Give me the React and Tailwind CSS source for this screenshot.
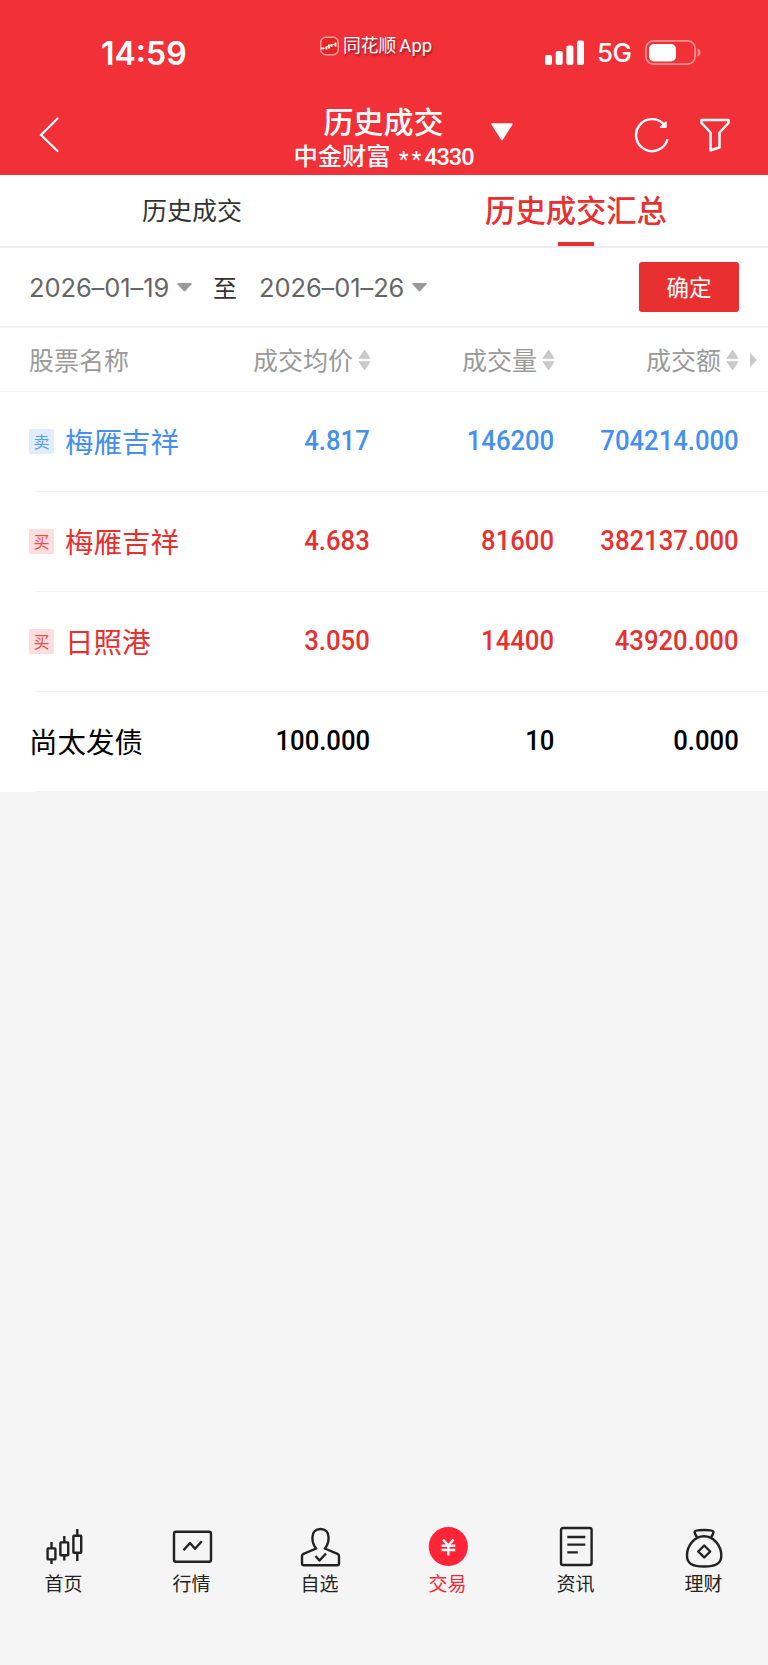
import { useState } from "react";

const trades = [
  { side: "卖", name: "梅雁吉祥", price: "4.817", volume: "146200", amount: "704214.000" },
  { side: "买", name: "梅雁吉祥", price: "4.683", volume: "81600", amount: "382137.000" },
  { side: "买", name: "日照港", price: "3.050", volume: "14400", amount: "43920.000" },
  { side: "", name: "尚太发债", price: "100.000", volume: "10", amount: "0.000" },
];

const rowColor = {
  卖: "text-[#458ff0]",
  买: "text-[#e93030]",
  "": "text-black",
};

const badgeColor = {
  卖: "bg-[#e0edfd] text-[#5b9cf1]",
  买: "bg-[#fddede] text-[#ec4c4c]",
};

const navItems = [
  {
    label: "首页",
    icon: (
      <>
        <rect x="7.6" y="25.4" width="7.8" height="11" rx="0.5" />
        <path d="M11.5 19v6M11.5 36.5v4.500" />
        <rect x="20.4" y="19.4" width="7.8" height="12.8" rx="0.5" />
        <path d="M24.3 13v6.500M24.300 32.500v5" />
        <rect x="33.4" y="12.8" width="7.8" height="17" rx="0.5" />
        <path d="M37.3 6v7M37.300 30v8" />
      </>
    ),
  },
  {
    label: "行情",
    icon: (
      <>
        <rect x="6" y="8.8" width="37" height="30" rx="2" />
        <path d="M15.5 27.3l6.500-7.300 5 5.800 6.800-7.600" />
      </>
    ),
  },
  {
    label: "自选",
    icon: (
      <>
        <path d="M20.2 25.5C17.6 22.8 16.4 19 16.4 14.6 16.4 9 19.8 6 24.5 6s8.1 3 8.1 8.6c0 4.4-1.2 8.2-3.8 10.9L41.5 30.8Q43 31.5 43 33V40.5Q43 42.3 41.2 42.3H7.8Q6 42.3 6 40.5V33Q6 31.5 7.5 30.8Z" />
        <path d="M19.5 33l4 4.5 6.5-7" />
      </>
    ),
  },
  {
    label: "交易",
    active: true,
    icon: (
      <>
        <circle cx="24.3" cy="23.5" r="19.6" fill="#ff2436" stroke="none" />
        <path d="M19 16.5l5.3 6 5.3-6M17.5 22.7h13.8M17.5 27h13.8M24.3 22.5v10" stroke="#fff" />
      </>
    ),
  },
  {
    label: "资讯",
    icon: (
      <>
        <rect x="9" y="5" width="30.6" height="37" rx="2" />
        <path d="M15.3 14h18M15.3 21.6h18M15.3 29.4h10.5" />
      </>
    ),
  },
  {
    label: "理财",
    icon: (
      <>
        <path d="M17 14C15 11.4 14.5 9.8 14.7 8.6Q15 7 24 7T33.4 8.6C33.6 9.8 33 11.4 31.2 14" />
        <path d="M24 13.2C14.5 13.2 7 22.5 7 32.5 7 40.5 12 43.5 24 43.5S41.3 40.5 41.3 32.5C41.3 22.5 33.5 13.2 24 13.2Z" />
        <path d="M24.2 22.5l6 6-6 6-6-6z" />
      </>
    ),
  },
];

function StatusBar() {
  return (
    <div className="relative h-[98px] flex items-center pt-[7px]">
      <div className="pl-[101px] pt-[2px] w-[320px] font-['Inter',sans-serif] text-[32px] leading-none font-semibold">
        14:59
      </div>

      {/* App watermark */}
      <div className="absolute left-[320px] top-[33px] flex items-center gap-1">
        <svg width="19" height="20" viewBox="0 0 19 20" fill="none">
          <rect x="0.8" y="1.3" width="17.4" height="17.4" rx="5" fill="#e32727" stroke="#fba0a2" strokeWidth="1.4" />
          <path d="M1 12.3h3M6.5 10.5v3M9 8.5v4M11.5 8v3M15.5 6.5v4" stroke="#fff" strokeWidth="1.8" />
          <path d="M3.5 12.8L9 10l6.5-2" stroke="#fff" strokeWidth="0.8" />
        </svg>
        <span className="text-[17.8px] leading-[23px] whitespace-nowrap [text-shadow:1px_2px_2px_rgba(0,0,0,0.4)]">
          同花顺<span className="font-['Roboto',sans-serif] text-[18.5px] pl-[3px]">App</span>
        </span>
      </div>

      <div className="ml-auto mr-[67px] flex items-center">
        <svg width="39" height="25" viewBox="0 0 39 25" fill="#fff">
          <rect x="0" y="15" width="7" height="10" rx="2" />
          <rect x="10.7" y="11" width="7" height="14" rx="2" />
          <rect x="21.4" y="5.5" width="7" height="19.5" rx="2" />
          <rect x="32" y="0.5" width="7" height="24.5" rx="2" />
        </svg>
        <span className="ml-[13px] w-[35px] pt-px font-['Inter',sans-serif] text-[26px] leading-none font-medium tracking-[-0.5px]">
          5G
        </span>
        <svg className="ml-[13px]" width="56" height="25" viewBox="0 0 56 25">
          <rect x="0.9" y="0.9" width="49.2" height="23.2" rx="7.5" fill="none" stroke="#f99094" strokeWidth="1.7" />
          <rect x="4" y="4" width="27" height="17.5" rx="5" fill="#fff" />
          <path d="M52.5 8.5q3 1 3 4t-3 4z" fill="#f99094" />
        </svg>
      </div>
    </div>
  );
}

function Header() {
  return (
    <header className="h-[174.5px] bg-[#f23038] text-white">
      <StatusBar />
      <div className="h-[76px] flex">
        <div className="w-[294px] pl-[38px] pt-[18px]">
          <svg width="22" height="38" viewBox="0 0 22 38" fill="none" stroke="#fff" strokeWidth="2.2" strokeLinecap="round">
            <path d="M19.5 2.5L3 19 19.5 35" />
          </svg>
        </div>
        <div className="w-[179px] pt-[4px] flex flex-col items-center">
          <h1 className="text-[30px] leading-[36px] font-medium">历史成交</h1>
          <div className="text-[24.3px] leading-[34px] font-medium whitespace-nowrap flex">
            中金财富
            <span className="ml-[8px] relative top-[5px] font-['Roboto',sans-serif] text-[22px] tracking-[3px]">
              **
            </span>
            <span className="relative top-[2px] font-['Roboto',sans-serif] text-[23.5px] tracking-[-1px]">4330</span>
          </div>
        </div>
        <svg className="ml-[18px] mt-[25px]" width="22" height="18" viewBox="0 0 22 18" fill="#fff" stroke="#fff" strokeWidth="1.5" strokeLinejoin="round">
          <path d="M1 1h20L11 16.5z" />
        </svg>
        <svg className="ml-[121px] mt-[19px]" width="36" height="36" viewBox="0 0 36 36" fill="none" stroke="#fff" strokeWidth="2.4">
          <path d="M33.5 22.3A16 16 0 1 1 30 7.5" />
          <path d="M26.5 10.3h5.500V5z" fill="#fff" strokeWidth="1.5" strokeLinejoin="round" />
        </svg>
        <svg className="ml-[30px] mt-[20px]" width="30" height="34" viewBox="0 0 30 34" fill="none" stroke="#fff" strokeWidth="2.5" strokeLinejoin="round">
          <path d="M1.5 2H28.5V5L19.5 14.5V29.5L10.5 32.3V14.5L1.5 5Z" />
        </svg>
      </div>
    </header>
  );
}

function DownArrow() {
  return (
    <svg width="15" height="9" viewBox="0 0 15 9" fill="#999">
      <path d="M1 0h13q1 .3.5 1.2L8.6 7.8q-1.1 1-2.2 0L.5 1.2Q0 .3 1 0z" />
    </svg>
  );
}

function SortHead({ children }) {
  return (
    <div className="flex items-center justify-end gap-[5px]">
      {children}
      <svg width="13" height="22" viewBox="0 0 13 22" fill="#c8c8c8">
        <path d="M6.5 0.5L12.8 9.8H.2zM6.5 21.5L12.8 12.2H.2z" />
      </svg>
    </div>
  );
}

function Num({ children }) {
  return (
    <div className="flex justify-end pb-[2px]">
      <span className="inline-block origin-right scale-x-90 font-['Roboto',sans-serif] font-medium text-[28.5px] leading-[34px]">
        {children}
      </span>
    </div>
  );
}

export default function App() {
  const [tab, setTab] = useState("汇总");

  return (
    <div className="w-[768px] h-[1665px] flex flex-col bg-[#f5f5f5] overflow-hidden font-['Noto_Sans_CJK_SC',sans-serif]">
      <Header />

      <main className="bg-white">
        {/* Tabs */}
        <div className="grid grid-cols-2 h-[73.5px] border-b-2 border-[#eeeeee]">
          <button onClick={() => setTab("明细")} className="pb-px text-[25px] text-[#333]">
            历史成交
          </button>
          <button
            onClick={() => setTab("汇总")}
            className="relative pb-[2px] text-[30.3px] font-medium text-[#e93030]"
          >
            历史成交汇总
            {tab === "汇总" && (
              <span className="absolute bottom-0 left-[174px] w-[36px] h-1 bg-[#e93030]" />
            )}
          </button>
        </div>

        {/* Date range */}
        <div className="h-20 border-b-2 border-[#f1f1f1] flex items-center pl-[29px] pr-[29px] text-[#666]">
          <div className="w-[148px] pt-[2px] font-['Inter',sans-serif] text-[25.5px] tracking-[-0.1px] whitespace-nowrap">
            2026–01–19
          </div>
          <DownArrow />
          <span className="ml-[21px] w-[46px] text-[24px] text-[#333]">至</span>
          <div className="w-[153px] pt-[2px] font-['Inter',sans-serif] text-[25.5px] tracking-[-0.1px] whitespace-nowrap">
            2026–01–26
          </div>
          <DownArrow />
          <button className="ml-auto w-[100px] h-[50px] rounded-[3px] bg-[#e93030] text-white text-[22.5px]">
            确定
          </button>
        </div>

        {/* Column titles */}
        <div className="h-16 border-b border-[#f1f1f1] grid grid-cols-[171px_171px_184px_184px_29px] items-center pl-[29px] text-[25px] text-[#999]">
          <span>股票名称</span>
          <SortHead>成交均价</SortHead>
          <SortHead>成交量</SortHead>
          <SortHead>成交额</SortHead>
          <svg className="ml-[11px]" width="7" height="14" viewBox="0 0 7 14" fill="#c8c8c8">
            <path d="M0 0l7 7-7 7z" />
          </svg>
        </div>

        {trades.map((t, i) => (
          <div key={i} className={rowColor[t.side]}>
            <div className="h-[99px] grid grid-cols-[170px_171px_184px_185px] items-center pl-[29px]">
              <div className="flex items-center text-[28.5px] whitespace-nowrap">
                {t.side && (
                  <span
                    className={`w-[25px] h-[25px] mr-[11px] pb-[2px] rounded-[2px] flex items-center justify-center text-[16px] leading-none ${badgeColor[t.side]}`}
                  >
                    {t.side}
                  </span>
                )}
                {t.name}
              </div>
              <Num>{t.price}</Num>
              <Num>{t.volume}</Num>
              <Num>{t.amount}</Num>
            </div>
            <div className="ml-9 h-px bg-[#f3f3f3]" />
          </div>
        ))}
      </main>

      {/* Bottom navigation */}
      <nav className="mt-auto h-[142px] grid grid-cols-6">
        {navItems.map((item) => (
          <div
            key={item.label}
            className={`flex flex-col items-center pr-px ${item.active ? "text-[#ff2436]" : "text-[#222]"}`}
          >
            <svg width="48" height="48" viewBox="0 0 48 48" fill="none" stroke="currentColor" strokeWidth="2.4" strokeLinejoin="round">
              {item.icon}
            </svg>
            <span className="text-[19px] leading-[24px]">{item.label}</span>
          </div>
        ))}
      </nav>
    </div>
  );
}
